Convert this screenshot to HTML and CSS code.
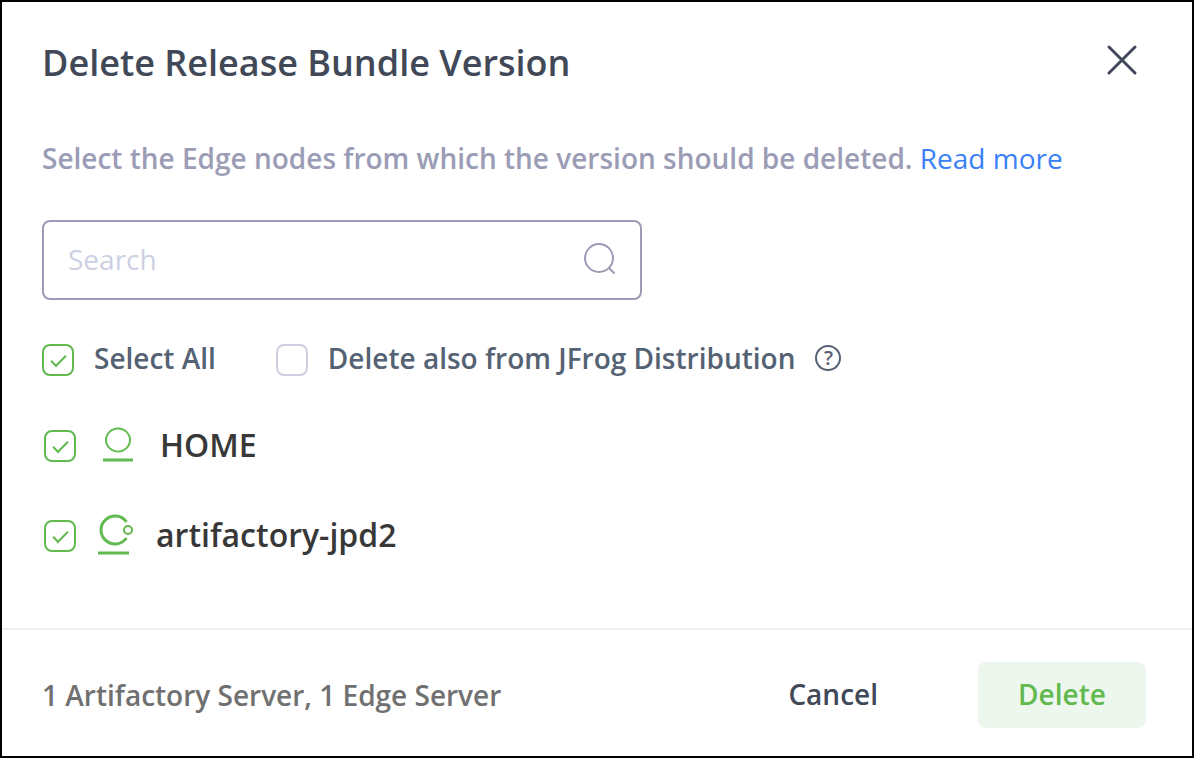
FILE: index.html
```html
<!DOCTYPE html>
<html lang="en">
<head>
    <meta charset="UTF-8">
    <meta name="viewport" content="width=device-width, initial-scale=1.0">
    <title>Delete Release Bundle Version</title>
    <link rel="stylesheet" href="styles.css">
</head>
<body>
    <form class="dialog">
        <header class="dialog-header">
            <h1>Delete Release Bundle Version</h1>
            <button type="button" class="close" aria-label="Close">
                <svg width="32" height="32" viewBox="0 0 32 32">
                    <path d="M3 3 L29 29 M29 3 L3 29"/>
                </svg>
            </button>
        </header>

        <main class="dialog-body">
            <p class="intro">Select the Edge nodes from which the version should be deleted. <a href="#">Read more</a></p>

            <div class="search">
                <input type="text" placeholder="Search" aria-label="Search">
                <svg width="34" height="34" viewBox="0 0 34 34">
                    <circle cx="17" cy="15" r="14"/>
                    <path d="M27 25 L32 30"/>
                </svg>
            </div>

            <div class="options">
                <label class="option"><input type="checkbox" checked> <span>Select All</span></label>
                <label class="option"><input type="checkbox"> <span>Delete also from JFrog Distribution</span></label>
                <button type="button" class="help" aria-label="Help">?</button>
            </div>

            <ul class="nodes">
                <li>
                    <label class="node">
                        <input type="checkbox" checked>
                        <svg width="40" height="44" viewBox="0 0 40 44">
                            <ellipse cx="20" cy="16" rx="12" ry="11.500"/>
                            <path class="base" d="M5 36 H35"/>
                        </svg>
                        <span class="edge-name">HOME</span>
                    </label>
                </li>
                <li>
                    <label class="node">
                        <input type="checkbox" checked>
                        <svg width="40" height="44" viewBox="0 0 40 44">
                            <path class="ring" d="M28.500 8 A14 14 0 1 0 28.500 24"/>
                            <circle cx="30" cy="16" r="4"/>
                            <path class="base" d="M0 39 H31"/>
                        </svg>
                        <span>artifactory-jpd2</span>
                    </label>
                </li>
            </ul>
        </main>

        <footer class="dialog-footer">
            <p>1 Artifactory Server, 1 Edge Server</p>
            <button type="button" class="cancel">Cancel</button>
            <button type="submit" class="delete">Delete</button>
        </footer>
    </form>
</body>
</html>
```
FILE: styles.css
```css
*, *::before {
    box-sizing: border-box;
}

body {
    margin: 0;
    font-family: "Open Sans", sans-serif;
    font-size: 28px;
    line-height: 40px;
    font-weight: 600;
    color: #414857;
    background-color: #fff;
}

h1, p, ul {
    margin: 0;
    padding: 0;
}

button, input {
    font: inherit;
    margin: 0;
}

button {
    padding: 0;
    border: none;
    background: none;
    color: inherit;
    cursor: pointer;
}

svg {
    flex: none;
    fill: none;
    stroke-width: 2;
}

.dialog {
    display: flex;
    flex-direction: column;
    min-height: 100vh;
    border: 2px solid #000;
}

.dialog-header {
    display: flex;
    align-items: center;
    justify-content: space-between;
    padding: 36px 54px 0 40px;
}

h1 {
    font-size: 36px;
    line-height: 50px;
    font-weight: 600;
}

.close {
    display: flex;
    padding-bottom: 6px;
}

.close svg {
    stroke: #414857;
    stroke-width: 3;
    stroke-linecap: round;
}

.dialog-body {
    flex: 1;
    padding: 50px 40px 40px;
}

.intro {
    color: #9b9cb5;
}

.intro a {
    color: #3a80f7;
    font-weight: 400;
    text-decoration: none;
}

.search {
    display: flex;
    align-items: center;
    width: 100%;
    max-width: 600px;
    height: 80px;
    margin-top: 42px;
    padding: 0 24px;
    border: 2px solid #9b9cb5;
    border-radius: 8px;
}

.search input {
    flex: 1;
    min-width: 0;
    padding: 0 0 2px;
    border: none;
    outline: none;
    font-weight: 400;
    color: #414857;
}

.search input::placeholder {
    color: #cdd0e3;
    opacity: 1;
}

.search svg {
    stroke: #9b9cb5;
    stroke-width: 2;
    stroke-linecap: round;
}

input[type="checkbox"] {
    appearance: none;
    display: grid;
    place-items: center;
    flex: none;
    width: 32px;
    height: 32px;
    border: 2px solid #cdd0e3;
    border-radius: 8px;
}

input[type="checkbox"]:checked {
    border-color: #61b94f;
}

/* tick */
input[type="checkbox"]:checked::before {
    content: "";
    width: 15px;
    height: 8px;
    margin-bottom: 2px;
    border: solid #61b94f;
    border-width: 0 0 2px 2px;
    transform: rotate(-45deg);
}

.options {
    display: flex;
    align-items: center;
    margin-top: 38px;
    color: #556273;
}

.option {
    display: flex;
    align-items: center;
    gap: 20px;
    margin-right: 60px;
}

.option + .option {
    margin-right: 20px;
}

.option span, .help {
    margin-bottom: 4px;
}

.help {
    width: 26px;
    height: 26px;
    border: 2px solid #556273;
    border-radius: 50%;
    font-size: 20px;
    line-height: 22px;
}

.nodes {
    display: grid;
    gap: 42px;
    margin-top: 40px;
    padding-left: 2px;
    list-style: none;
}

.node {
    display: flex;
    align-items: center;
    font-size: 32px;
    line-height: 46px;
    color: #383838;
}

.node svg {
    margin: 0 18px 0 22px;
    stroke: #61b94f;
}

.node .base, .node .ring {
    stroke-width: 3;
}

.node span {
    margin-bottom: 2px;
}

.node .edge-name {
    padding-left: 4px;
}

.dialog-footer {
    display: flex;
    align-items: center;
    padding: 32px 46px 28px 40px;
    border-top: 2px solid #f0f0f1;
    color: #707070;
}

.dialog-footer p {
    flex: 1;
}

.dialog-footer button {
    height: 66px;
    padding-bottom: 2px;
}

.cancel {
    margin-right: 100px;
    color: #414857;
}

.delete {
    width: 168px;
    border-radius: 8px;
    background-color: #edf7ee;
    color: #61b94f;
}
```
